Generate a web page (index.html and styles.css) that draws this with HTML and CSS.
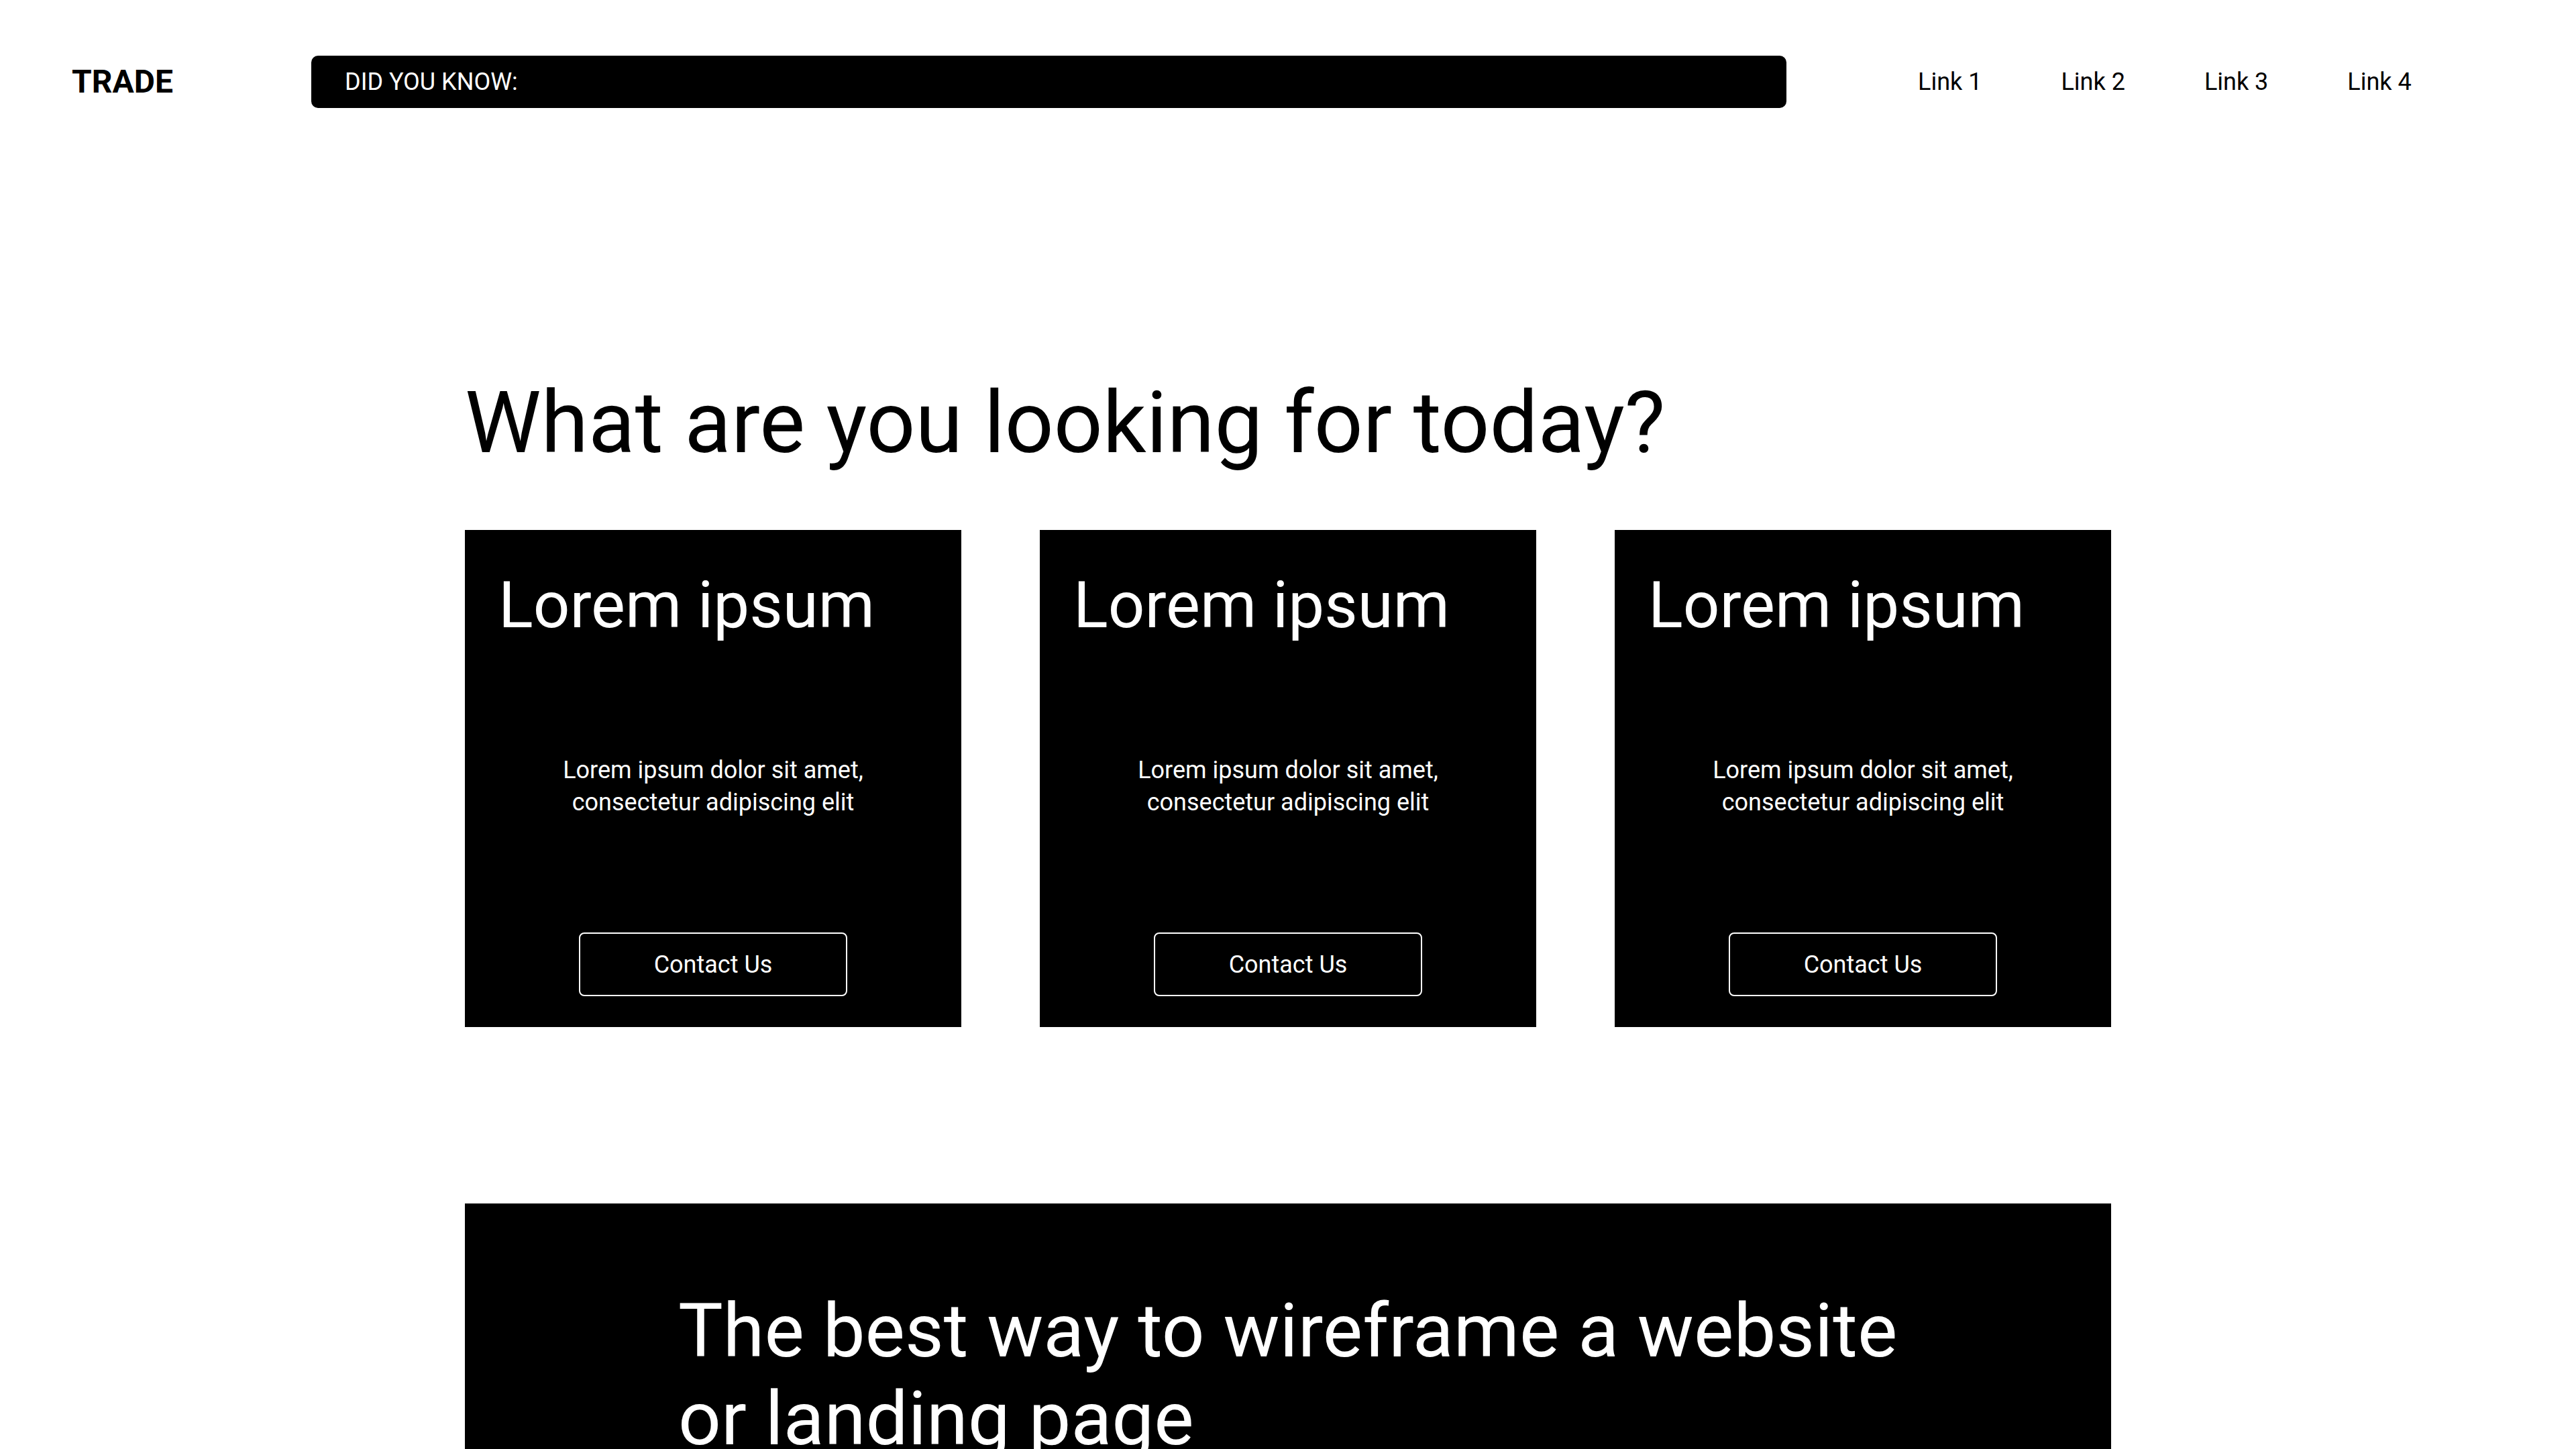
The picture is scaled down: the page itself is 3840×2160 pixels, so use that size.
FILE: index.html
```html
<!DOCTYPE html>
<html lang="en">
<head>
<meta charset="utf-8">
<title>TRADE</title>
<link rel="stylesheet" href="styles.css">
</head>
<body>
<header class="topbar">
  <div class="logo">TRADE</div>
  <div class="ticker">DID YOU KNOW:</div>
  <nav class="links">
    <a class="link" href="#">Link 1</a>
    <a class="link" href="#">Link 2</a>
    <a class="link" href="#">Link 3</a>
    <a class="link" href="#">Link 4</a>
  </nav>
</header>
<main class="container">
  <h1 class="headline">What are you looking for today?</h1>
  <section class="cards">
    <div class="card">
      <h2 class="card-title">Lorem ipsum</h2>
      <div class="card-desc"><p>Lorem ipsum dolor sit amet,<br>consectetur adipiscing elit</p></div>
      <button class="card-btn">Contact Us</button>
    </div>
    <div class="card">
      <h2 class="card-title">Lorem ipsum</h2>
      <div class="card-desc"><p>Lorem ipsum dolor sit amet,<br>consectetur adipiscing elit</p></div>
      <button class="card-btn">Contact Us</button>
    </div>
    <div class="card">
      <h2 class="card-title">Lorem ipsum</h2>
      <div class="card-desc"><p>Lorem ipsum dolor sit amet,<br>consectetur adipiscing elit</p></div>
      <button class="card-btn">Contact Us</button>
    </div>
  </section>
  <section class="banner">
    <h2 class="banner-title">The best way to wireframe a website or landing page</h2>
  </section>
</main>
</body>
</html>
```
FILE: styles.css
```css
* { box-sizing: border-box; }
html, body {
  margin: 0;
  padding: 0;
  background: #fff;
  color: #000;
  font-family: Roboto, "Liberation Sans", sans-serif;
}
.topbar {
  display: flex;
  align-items: center;
  padding: 83px 0 0 107px;
}
.logo {
  width: 357px;
  font-size: 48px;
  font-weight: 700;
  line-height: 78px;
}
.ticker {
  width: 2199px;
  height: 78px;
  background: #000;
  color: #fff;
  border-radius: 10px;
  display: flex;
  align-items: center;
  padding-left: 50px;
  font-size: 36px;
}
.links {
  display: flex;
  gap: 118px;
  margin-left: 196px;
}
.link {
  color: #000;
  text-decoration: none;
  font-size: 36px;
}
.container {
  width: 2454px;
  margin: 0 auto;
}
.headline {
  margin: 394px 0 85px;
  font-size: 128px;
  font-weight: 400;
  line-height: normal;
}
.cards {
  display: grid;
  grid-template-columns: repeat(3, 740px);
  gap: 117px;
}
.card {
  height: 741px;
  background: #000;
  color: #fff;
  display: flex;
  flex-direction: column;
  padding: 56px 50px 46px;
}
.card-title {
  margin: 0;
  font-size: 96px;
  font-weight: 400;
  line-height: normal;
}
.card-desc {
  flex: 1;
  display: flex;
  align-items: center;
  justify-content: center;
  text-align: center;
  padding-bottom: 4px;
}
.card-desc p {
  margin: 0;
  font-size: 36px;
  line-height: 48px;
}
.card-btn {
  align-self: center;
  width: 400px;
  height: 95px;
  background: #000;
  color: #fff;
  border: 2px solid #fff;
  border-radius: 8px;
  font-family: Roboto, "Liberation Sans", sans-serif;
  font-size: 36px;
  padding: 0;
}
.banner {
  margin-top: 263px;
  background: #000;
  color: #fff;
  padding: 124px 200px 124px 318px;
}
.banner-title {
  margin: 0;
  max-width: 1880px;
  font-size: 112px;
  font-weight: 400;
  line-height: normal;
}
```
